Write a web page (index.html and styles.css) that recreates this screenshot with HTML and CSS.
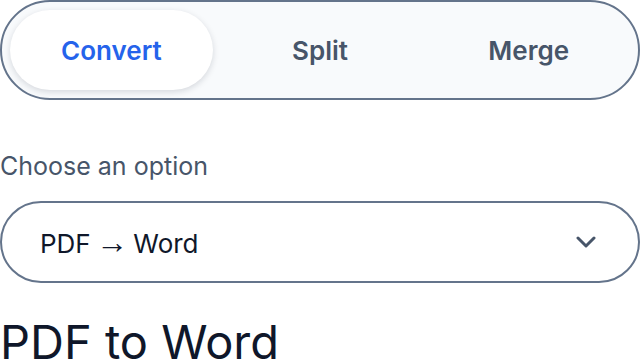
FILE: index.html
```html
<!DOCTYPE html>
<html lang="en">
<head>
<meta charset="UTF-8">
<title>PDF Tools</title>
<link rel="stylesheet" href="styles.css">
</head>
<body>

<div class="tabs">
	<button class="tab active">Convert</button>
	<button class="tab">Split</button>
	<button class="tab">Merge</button>
</div>

<div class="field">
	<label class="field-label">Choose an option</label>
	<div class="select">
		<span class="select-value">PDF <span class="arrow">→</span> Word</span>
		<svg class="chevron" width="20" height="12" viewBox="0 0 20 12" fill="none" stroke="currentColor" stroke-width="3" stroke-linecap="round" stroke-linejoin="round"><path d="M2 2l8 8 8-8"/></svg>
	</div>
</div>

<h1 class="title">PDF to Word</h1>

</body>
</html>
```

FILE: styles.css
```css
/* *** Base *** */
body {
	margin: 0;
	font-family: Inter, "Noto Sans", sans-serif;
	color: #0f172a;
	background: #fff;
}

/* *** Tabs *** */
.tabs {
	display: grid;
	grid-template-columns: 1fr 1fr 1fr;
	gap: 6px;
	padding: 8px;
	border: 2px solid #64748b;
	border-radius: 50px;
	background: #f8fafc;
}

.tab {
	height: 80px;
	border: 0;
	border-radius: 40px;
	background: transparent;
	font-family: inherit;
	font-size: 26px;
	font-weight: 600;
	color: #475569;
}

.tab.active {
	background: #fff;
	color: #2563eb;
	box-shadow: 0 2px 6px rgba(15, 23, 42, 0.15);
}

/* *** Select field *** */
.field {
	margin-top: 51px;
}

.field-label {
	display: block;
	font-size: 25px;
	color: #475569;
	margin-bottom: 20px;
}

.select {
	display: flex;
	align-items: center;
	justify-content: space-between;
	height: 78px;
	padding: 0 42px 0 38px;
	border: 2px solid #64748b;
	border-radius: 41px;
}

.select-value {
	font-size: 26px;
}

.arrow {
	font-family: "Liberation Sans", sans-serif;
	font-size: 32px;
	line-height: 1;
	margin: 0 -2px;
}

.chevron {
	color: #475569;
}

/* *** Heading *** */
.title {
	margin: 30px 0 0;
	font-size: 47px;
	font-weight: 400;
}
```
